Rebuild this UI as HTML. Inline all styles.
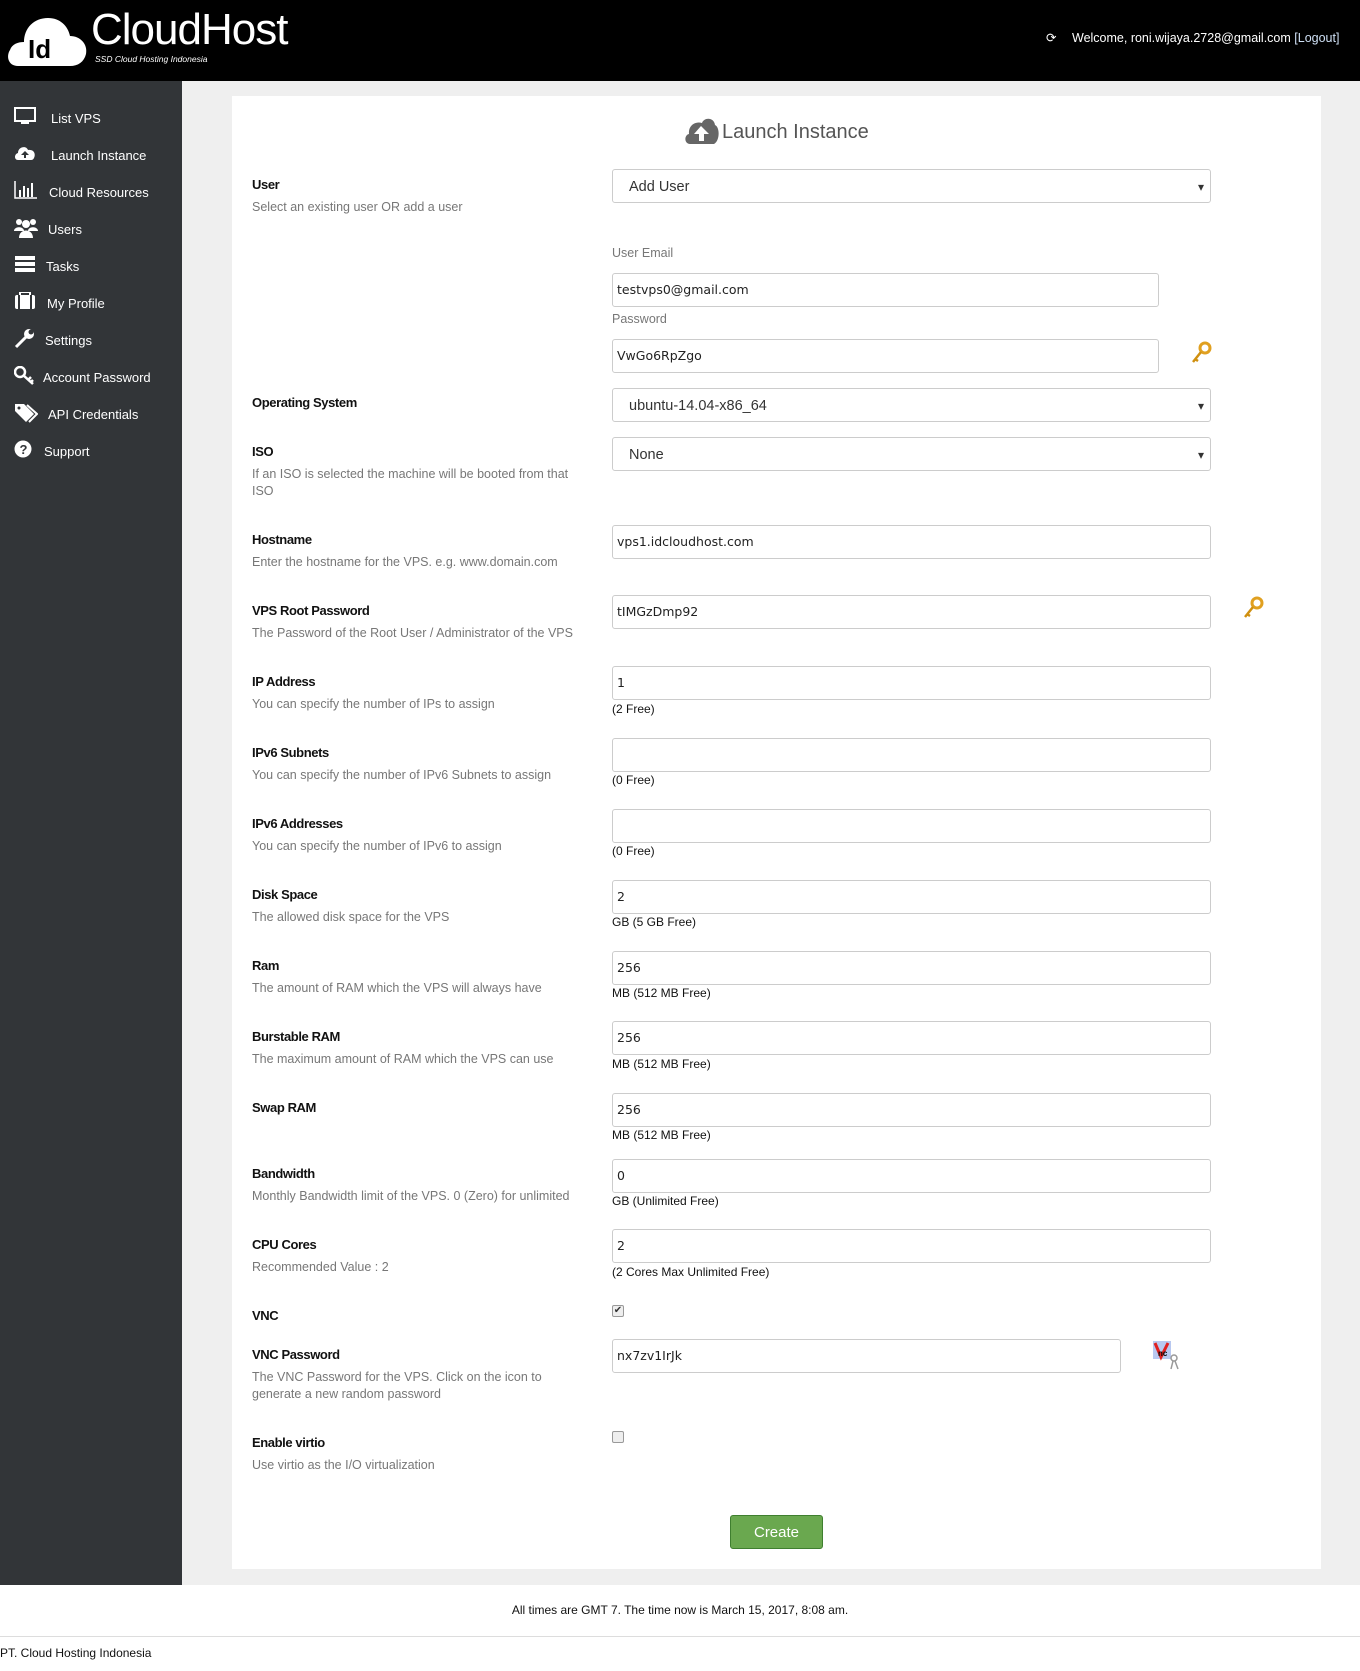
<!DOCTYPE html>
<html><head><meta charset="utf-8"><style>
*{box-sizing:border-box;margin:0;padding:0}
body{width:1360px;height:1671px;position:relative;background:#fff;font-family:"Liberation Sans",sans-serif;overflow:hidden}
.a{position:absolute}
#hdr{left:0;top:0;width:1360px;height:81px;background:#000}
#side{left:0;top:81px;width:182px;height:1504px;background:#323538}
#gray{left:182px;top:81px;width:1178px;height:1504px;background:#efefef}
#panel{left:232px;top:96px;width:1089px;height:1473px;background:#fff}
.nav{position:absolute;left:14px;color:#fff;font-size:13px;height:20px;line-height:20px}
.nav svg{position:absolute;left:0;top:0}
.nav span{position:absolute;white-space:nowrap;top:2px}
.lbl{position:absolute;left:252px;font-size:13px;font-weight:bold;color:#111;letter-spacing:-0.4px}
.dsc{position:absolute;left:252px;font-size:12.5px;color:#777;line-height:17px;width:330px}
.in{position:absolute;left:612px;width:599px;height:34px;border:1px solid #ccc;border-radius:3px;background:#fff;font-family:"DejaVu Sans",sans-serif;font-size:12.5px;padding:0 0 0 4px;line-height:32px;color:#222}
.sel{padding-left:16px;font-size:14.5px;color:#333;font-family:"Liberation Sans",sans-serif;line-height:34px}
.sel:after{content:"▾";position:absolute;right:6px;top:0;font-size:12px;color:#333}
.note{position:absolute;left:612px;font-size:12px;color:#111}
.sm{position:absolute;left:612px;font-size:12.5px;color:#777}
.cb{position:absolute;left:612px;width:12px;height:12px;border:1px solid #999;border-radius:2px;background:#eee}
</style></head><body>
<div id="hdr" class="a">
 <svg class="a" style="left:6px;top:8px" width="82" height="60" viewBox="0 0 82 60"><path d="M12 58 C2 58 0 48 4 42 C6 36 12 34 18 34 C18 20 28 10 42 10 C54 10 62 18 64 28 C74 28 82 36 80 46 C78 54 72 58 64 58 Z" fill="#fff"/><text x="22" y="50" font-family="Liberation Sans" font-size="26" font-weight="bold" fill="#000">Id</text></svg>
 <div class="a" style="left:91px;top:5px;color:#fff;font-size:44px;letter-spacing:-1px">CloudHost</div>
 <div class="a" style="left:95px;top:54px;color:#fff;font-size:8.5px;font-style:italic">SSD Cloud Hosting Indonesia</div>
 <div class="a" style="left:1046px;top:30px;color:#fff;font-size:12.5px">⟳</div>
 <div class="a" style="left:1072px;top:31px;color:#fff;font-size:12.5px;white-space:nowrap">Welcome, roni.wijaya.2728@gmail.com <span style="color:#cfe0f5">[Logout]</span></div>
</div>
<div id="side" class="a"></div>
<div id="gray" class="a"></div>
<div id="panel" class="a"></div>

<div class="nav" style="top:107px"><svg width="22" height="18"><rect x="1" y="1" width="20" height="13" fill="none" stroke="#fff" stroke-width="2"/><rect x="7" y="15" width="8" height="2" fill="#fff"/></svg><span style="left:37px">List VPS</span></div>
<div class="nav" style="top:144px"><svg width="22" height="18"><path d="M4 16 C0 16 0 10 4 9 C4 3 12 1 14 6 C20 5 22 10 20 14 C19 16 18 16 16 16Z" fill="#fff"/><path d="M11 7 L7 11 H10 V14 H12 V11 H15Z" fill="#323538"/></svg><span style="left:37px">Launch Instance</span></div>
<div class="nav" style="top:181px"><svg width="24" height="18"><path d="M1 0V17H23" stroke="#fff" stroke-width="1.5" fill="none"/><rect x="5" y="9" width="2" height="7" fill="#fff"/><rect x="9" y="5" width="2" height="11" fill="#fff"/><rect x="13" y="7" width="2" height="9" fill="#fff"/><rect x="17" y="2" width="2" height="14" fill="#fff"/></svg><span style="left:35px">Cloud Resources</span></div>
<div class="nav" style="top:218px"><svg width="24" height="20"><circle cx="5" cy="4" r="3" fill="#fff"/><circle cx="19" cy="4" r="3" fill="#fff"/><circle cx="12" cy="6" r="4" fill="#fff"/><path d="M0 13 C0 8 10 8 10 13Z M14 13 C14 8 24 8 24 13Z M5 20 C5 10 19 10 19 20Z" fill="#fff"/></svg><span style="left:34px">Users</span></div>
<div class="nav" style="top:255px"><svg width="22" height="18"><rect x="1" y="1" width="20" height="4" fill="#fff"/><rect x="1" y="7" width="20" height="4" fill="#fff"/><rect x="1" y="13" width="20" height="4" fill="#fff"/></svg><span style="left:32px">Tasks</span></div>
<div class="nav" style="top:292px"><svg width="22" height="18"><rect x="1" y="3" width="20" height="14" rx="2" fill="#fff"/><rect x="6" y="0" width="10" height="4" fill="none" stroke="#fff" stroke-width="2"/><rect x="4" y="3" width="2" height="14" fill="#323538"/><rect x="16" y="3" width="2" height="14" fill="#323538"/></svg><span style="left:33px">My Profile</span></div>
<div class="nav" style="top:329px"><svg width="22" height="20"><path d="M2 18 L12 8" stroke="#fff" stroke-width="3"/><circle cx="15" cy="5" r="5" fill="#fff"/><circle cx="17" cy="3" r="2.5" fill="#323538"/></svg><span style="left:31px">Settings</span></div>
<div class="nav" style="top:366px"><svg width="22" height="20"><circle cx="6" cy="6" r="5" fill="none" stroke="#fff" stroke-width="2.5"/><path d="M9 9 L19 18 M14 14 L17 11 M17 16 L19 14" stroke="#fff" stroke-width="2.5"/></svg><span style="left:29px">Account Password</span></div>
<div class="nav" style="top:403px"><svg width="24" height="20"><path d="M1 1 H10 L20 11 L12 19 L1 8Z" fill="#fff"/><circle cx="5" cy="5" r="1.5" fill="#323538"/><path d="M13 2 L23 11 L15 19" stroke="#fff" stroke-width="2" fill="none"/></svg><span style="left:34px">API Credentials</span></div>
<div class="nav" style="top:440px"><svg width="20" height="20"><circle cx="9" cy="9" r="8.5" fill="#fff"/><text x="5.5" y="14" font-size="13" font-weight="bold" fill="#323538" font-family="Liberation Sans">?</text></svg><span style="left:30px">Support</span></div>

<svg class="a" style="left:684px;top:117px" width="36" height="28" viewBox="0 0 36 28"><path d="M6 27 C0 27 0 18 5 17 C4 8 12 4 18 6 C20 0 30 0 31 8 C36 10 36 24 30 27Z" fill="#666"/><path d="M17 9 L10 17 H15 V24 H20 V17 H25Z" fill="#fff"/></svg>
<div class="a" style="left:722px;top:121px;font-size:20px;color:#555">Launch Instance</div>

<div class="lbl" style="top:177px">User</div><div class="dsc" style="top:199px">Select an existing user OR add a user</div>
<div class="in sel" style="top:169px">Add User</div>
<div class="sm" style="top:246px">User Email</div>
<div class="in" style="top:273px;width:547px">testvps0@gmail.com</div>
<div class="sm" style="top:312px">Password</div>
<div class="in" style="top:339px;width:547px">VwGo6RpZgo</div>
<svg class="a" style="left:1190px;top:341px" width="22" height="24"><circle cx="15" cy="7" r="5" fill="none" stroke="#e0a020" stroke-width="3"/><path d="M11 11 L3 21 M5 18 L8 20" stroke="#d09010" stroke-width="2.5"/></svg>

<div class="lbl" style="top:395px">Operating System</div>
<div class="in sel" style="top:388px">ubuntu-14.04-x86_64</div>
<div class="lbl" style="top:444px">ISO</div><div class="dsc" style="top:466px;width:325px">If an ISO is selected the machine will be booted from that ISO</div>
<div class="in sel" style="top:437px">None</div>

<div class="lbl" style="top:532px">Hostname</div><div class="dsc" style="top:554px">Enter the hostname for the VPS. e.g. www.domain.com</div>
<div class="in" style="top:525px">vps1.idcloudhost.com</div>
<div class="lbl" style="top:603px">VPS Root Password</div><div class="dsc" style="top:625px">The Password of the Root User / Administrator of the VPS</div>
<div class="in" style="top:595px">tIMGzDmp92</div>
<svg class="a" style="left:1242px;top:596px" width="22" height="24"><circle cx="15" cy="7" r="5" fill="none" stroke="#e0a020" stroke-width="3"/><path d="M11 11 L3 21 M5 18 L8 20" stroke="#d09010" stroke-width="2.5"/></svg>

<div class="lbl" style="top:674px">IP Address</div><div class="dsc" style="top:696px">You can specify the number of IPs to assign</div>
<div class="in" style="top:666px">1</div><div class="note" style="top:702px">(2 Free)</div>
<div class="lbl" style="top:745px">IPv6 Subnets</div><div class="dsc" style="top:767px">You can specify the number of IPv6 Subnets to assign</div>
<div class="in" style="top:738px"></div><div class="note" style="top:773px">(0 Free)</div>
<div class="lbl" style="top:816px">IPv6 Addresses</div><div class="dsc" style="top:838px">You can specify the number of IPv6 to assign</div>
<div class="in" style="top:809px"></div><div class="note" style="top:844px">(0 Free)</div>
<div class="lbl" style="top:887px">Disk Space</div><div class="dsc" style="top:909px">The allowed disk space for the VPS</div>
<div class="in" style="top:880px">2</div><div class="note" style="top:915px">GB (5 GB Free)</div>
<div class="lbl" style="top:958px">Ram</div><div class="dsc" style="top:980px">The amount of RAM which the VPS will always have</div>
<div class="in" style="top:951px">256</div><div class="note" style="top:986px">MB (512 MB Free)</div>
<div class="lbl" style="top:1029px">Burstable RAM</div><div class="dsc" style="top:1051px">The maximum amount of RAM which the VPS can use</div>
<div class="in" style="top:1021px">256</div><div class="note" style="top:1057px">MB (512 MB Free)</div>
<div class="lbl" style="top:1100px">Swap RAM</div>
<div class="in" style="top:1093px">256</div><div class="note" style="top:1128px">MB (512 MB Free)</div>
<div class="lbl" style="top:1166px">Bandwidth</div><div class="dsc" style="top:1188px;width:340px">Monthly Bandwidth limit of the VPS. 0 (Zero) for unlimited</div>
<div class="in" style="top:1159px">0</div><div class="note" style="top:1194px">GB (Unlimited Free)</div>
<div class="lbl" style="top:1237px">CPU Cores</div><div class="dsc" style="top:1259px">Recommended Value : 2</div>
<div class="in" style="top:1229px">2</div><div class="note" style="top:1265px">(2 Cores Max Unlimited Free)</div>
<div class="lbl" style="top:1308px">VNC</div>
<div class="cb" style="top:1305px;font-size:10px;line-height:10px;text-align:center;color:#333">✔</div>
<div class="lbl" style="top:1347px">VNC Password</div><div class="dsc" style="top:1369px;width:300px">The VNC Password for the VPS. Click on the icon to generate a new random password</div>
<div class="in" style="top:1339px;width:509px">nx7zv1IrJk</div>
<svg class="a" style="left:1152px;top:1340px" width="30" height="30"><rect x="1" y="1" width="18" height="18" fill="#b8c8f0"/><path d="M3 3 L9 17 L16 3" stroke="#e02020" stroke-width="3" fill="none"/><text x="6" y="16" font-size="8" font-weight="bold" fill="#000" font-family="Liberation Sans">nc</text><circle cx="22" cy="18" r="3" fill="none" stroke="#999" stroke-width="1.5"/><path d="M21 21 L19 29 M23 21 L26 29" stroke="#999" stroke-width="1.5"/></svg>
<div class="lbl" style="top:1435px">Enable virtio</div><div class="dsc" style="top:1457px">Use virtio as the I/O virtualization</div>
<div class="cb" style="top:1431px"></div>

<div class="a" style="left:730px;top:1515px;width:93px;height:34px;background:#6aa84f;border:1px solid #3f7f2f;border-radius:3px;color:#fff;font-size:15px;text-align:center;line-height:33px">Create</div>

<div class="a" style="left:182px;top:1585px;width:1178px;height:86px;background:#fff"></div>
<div class="a" style="left:0;top:1603px;width:1360px;text-align:center;font-size:12px;color:#111">All times are GMT 7. The time now is March 15, 2017, 8:08 am.</div>
<div class="a" style="left:0;top:1636px;width:1360px;height:1px;background:#ddd"></div>
<div class="a" style="left:0;top:1646px;font-size:12px;color:#111">PT. Cloud Hosting Indonesia</div>
</body></html>
